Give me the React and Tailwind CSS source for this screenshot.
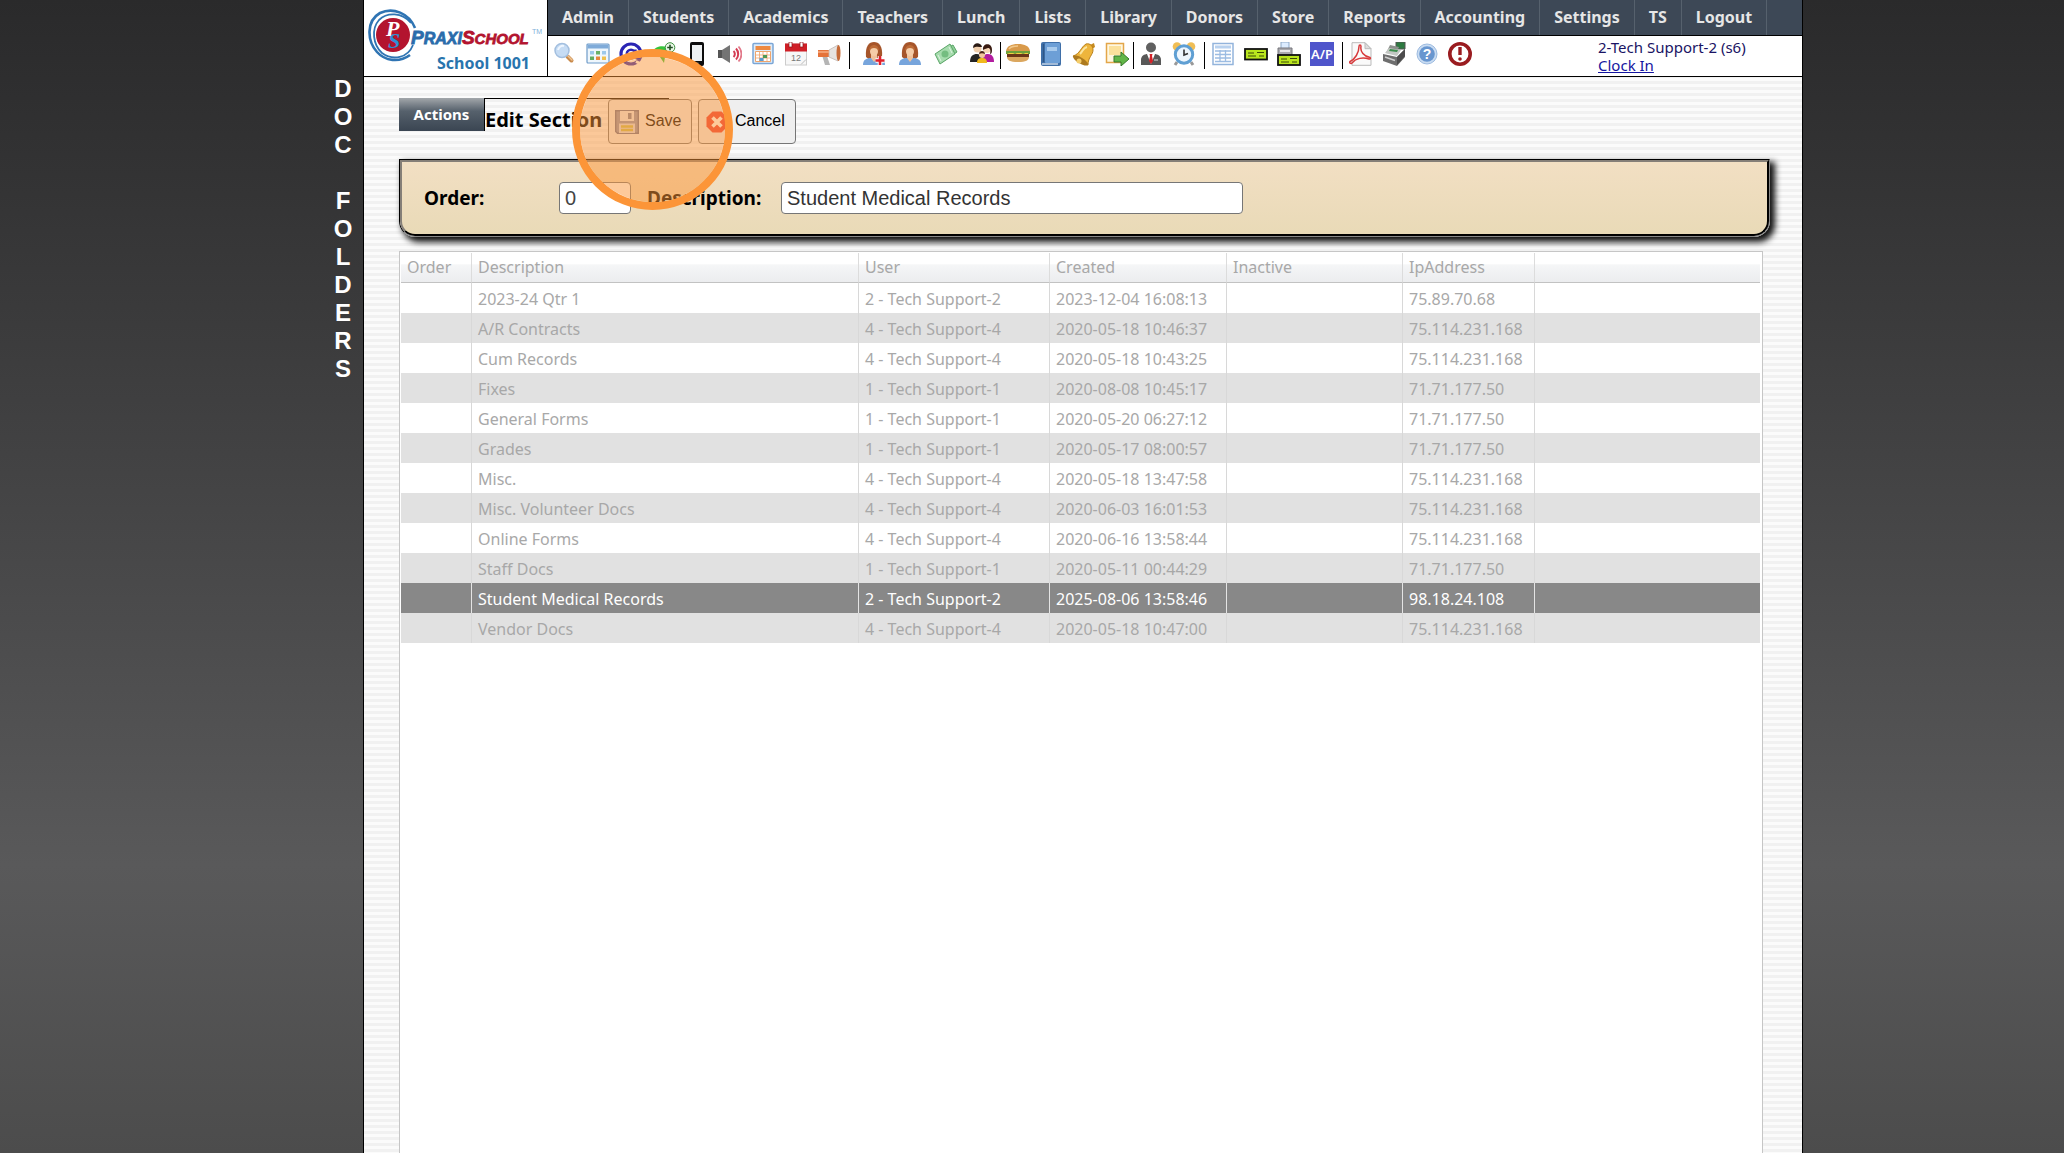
import React, { useState } from 'react';

const menuItems = [
  'Admin', 'Students', 'Academics', 'Teachers', 'Lunch', 'Lists', 'Library', 'Donors',
  'Store', 'Reports', 'Accounting', 'Settings', 'TS', 'Logout'
];

const sections = [
  { description: '2023-24 Qtr 1', user: '2 - Tech Support-2', created: '2023-12-04 16:08:13', ip: '75.89.70.68' },
  { description: 'A/R Contracts', user: '4 - Tech Support-4', created: '2020-05-18 10:46:37', ip: '75.114.231.168' },
  { description: 'Cum Records', user: '4 - Tech Support-4', created: '2020-05-18 10:43:25', ip: '75.114.231.168' },
  { description: 'Fixes', user: '1 - Tech Support-1', created: '2020-08-08 10:45:17', ip: '71.71.177.50' },
  { description: 'General Forms', user: '1 - Tech Support-1', created: '2020-05-20 06:27:12', ip: '71.71.177.50' },
  { description: 'Grades', user: '1 - Tech Support-1', created: '2020-05-17 08:00:57', ip: '71.71.177.50' },
  { description: 'Misc.', user: '4 - Tech Support-4', created: '2020-05-18 13:47:58', ip: '75.114.231.168' },
  { description: 'Misc. Volunteer Docs', user: '4 - Tech Support-4', created: '2020-06-03 16:01:53', ip: '75.114.231.168' },
  { description: 'Online Forms', user: '4 - Tech Support-4', created: '2020-06-16 13:58:44', ip: '75.114.231.168' },
  { description: 'Staff Docs', user: '1 - Tech Support-1', created: '2020-05-11 00:44:29', ip: '71.71.177.50' },
  { description: 'Student Medical Records', user: '2 - Tech Support-2', created: '2025-08-06 13:58:46', ip: '98.18.24.108', selected: true },
  { description: 'Vendor Docs', user: '4 - Tech Support-4', created: '2020-05-18 10:47:00', ip: '75.114.231.168' }
];

const Icon = ({ children }) => (
  <svg viewBox="0 0 24 24" className="block w-6 h-6" aria-hidden="true">{children}</svg>
);

const SearchIcon = () => (
  <Icon>
    <path d="M14.5 14.5L18.500 18.500" stroke="#c98a4b" strokeWidth="4" strokeLinecap="round" />
    <path d="M15 14L19 18" stroke="#efc493" strokeWidth="1.500" strokeLinecap="round" />
    <circle cx="9" cy="8.500" r="7" fill="#c6dcf4" stroke="#a3bfdf" strokeWidth="1.500" />
    <path d="M5 8a5 5 0 0 1 6-4" stroke="#eef6ff" strokeWidth="2" fill="none" />
  </Icon>
);

const WindowIcon = () => (
  <Icon>
    <rect x="1" y="2" width="22" height="19" rx="1" fill="#eef6fc" stroke="#6f9cc9" strokeWidth="1.200" />
    <rect x="1.500" y="2.500" width="21" height="4" fill="#7fabd9" />
    <rect x="4" y="9" width="4" height="3.500" fill="#9cc8ea" />
    <rect x="10" y="9" width="4" height="3.500" fill="#69b169" />
    <rect x="16" y="9" width="4" height="3.500" fill="#9cc8ea" />
    <rect x="4" y="14.500" width="4" height="3.500" fill="#62ab62" />
    <rect x="10" y="14.500" width="4" height="3.500" fill="#e8873c" />
    <rect x="16" y="14.500" width="4" height="3.500" fill="#efc04e" />
  </Icon>
);

const AtIcon = () => (
  <Icon>
    <circle cx="12" cy="12" r="10" fill="#fff" stroke="#2a25b4" strokeWidth="3.200" />
    <circle cx="12" cy="12" r="4.200" fill="none" stroke="#2a25b4" strokeWidth="2.600" />
    <path d="M16.500 7.500v7c0 3 4 2.500 5-.5" fill="none" stroke="#2a25b4" strokeWidth="2.400" />
    <path d="M17 19.500l5 2.500" stroke="#fff" strokeWidth="3" />
  </Icon>
);

const AddMessageIcon = () => (
  <Icon>
    <path d="M1 9c2-4 8-6 14-4l5 4c-1 5-4 6-7 6l-1 6-4-6C5 15 2 12 1 9z" fill="#35c53b" />
    <circle cx="18" cy="5.500" r="4.800" fill="#e9f8e7" stroke="#3c8f3e" />
    <path d="M18 2.700v5.600M15.200 5.500h5.600" stroke="#234f24" strokeWidth="1.600" />
  </Icon>
);

const PhoneIcon = () => (
  <Icon>
    <rect x="5" y="0" width="14" height="24" rx="2" fill="#0d0d0d" />
    <rect x="7" y="3" width="10" height="16" fill="#eef1f3" />
    <rect x="10.500" y="20.500" width="3" height="2" fill="#777" />
  </Icon>
);

const SpeakerIcon = () => (
  <Icon>
    <path d="M0 8h4v8H0z" fill="#555" />
    <path d="M4 8l8-5v18l-8-5z" fill="#747474" />
    <path d="M15.500 9a4 4 0 0 1 0 6" fill="none" stroke="#d43b52" strokeWidth="2" />
    <path d="M18 6.500a8 8 0 0 1 0 11" fill="none" stroke="#d43b52" strokeWidth="2" />
    <path d="M20.500 4.500a11 11 0 0 1 0 15" fill="none" stroke="#e2798a" strokeWidth="1.800" />
  </Icon>
);

const ScheduleIcon = () => (
  <Icon>
    <rect x="2" y="1.500" width="20" height="20" rx="1" fill="#deecf9" stroke="#7ba6d6" strokeWidth="1.500" />
    <rect x="4.500" y="4" width="15" height="4" fill="#ee8a41" />
    <path d="M4.500 9.500h15v10h-15z" fill="#fff" stroke="#efa56c" />
    <path d="M4.500 13h15M4.500 16h15M8.500 9.500v10M12 9.500v10M16 9.500v10" stroke="#efa56c" strokeWidth=".8" />
    <rect x="12" y="13" width="4" height="3" fill="#4f9955" />
    <rect x="8.500" y="16" width="4" height="3" fill="#5b9bd1" />
  </Icon>
);

const CalendarIcon = () => (
  <Icon>
    <rect x="1.500" y="2" width="21" height="21" fill="#f7f7f7" stroke="#ccc" />
    <rect x="1" y="1.500" width="22" height="8" fill="#cf1f27" />
    <rect x="5" y="0" width="3" height="5" fill="#fff" stroke="#8d1015" strokeWidth=".7" />
    <rect x="16" y="0" width="3" height="5" fill="#fff" stroke="#8d1015" strokeWidth=".7" />
    <text x="12" y="19" textAnchor="middle" fontSize="9" fill="#777" fontFamily="Liberation Sans, sans-serif">12</text>
    <path d="M17 22.500l5-5" stroke="#bbb" />
  </Icon>
);

const MegaphoneIcon = () => (
  <Icon>
    <path d="M5 13l3 10h5l-3-9z" fill="#b5b5b5" />
    <path d="M1 8h12v7H1z" fill="#e5733a" />
    <path d="M12 8l9-5v16l-9-4z" fill="#e7e3e0" stroke="#c0b8b2" strokeWidth=".8" />
    <ellipse cx="21.500" cy="11" rx="2" ry="8" fill="#c66a37" />
    <path d="M1 10h11" stroke="#f7ae85" strokeWidth="1.500" />
  </Icon>
);

const NurseIcon = ({ cross }) => (
  <Icon>
    <path d="M4 15C3 4 7 0 12 0s9 4 8 15l-4 3H8z" fill="#a6552a" />
    <path d="M1 23c0-5 3-7 8-7h6c5 0 8 2 8 7z" fill="#77a5dc" />
    <path d="M9 12h6v4l-3 4-3-4z" fill="#f0c29b" />
    <ellipse cx="12" cy="9.500" rx="4" ry="4.500" fill="#f5cda8" />
    <path d="M7 9c1-2 3-3 5-3 2 0 4 1 5 3 0-8-10-8-10 0z" fill="#bd6b37" />
    {cross && <path d="M18 14v9M13.500 18.500h9" stroke="#fff" strokeWidth="4.500" />}
    {cross && <path d="M18 14v9M13.500 18.500h9" stroke="#e0202b" strokeWidth="2.600" />}
  </Icon>
);

const MoneyIcon = () => (
  <Icon>
    <path d="M5 10L19 3l4 7-15 10z" fill="#8fcf98" stroke="#5aa567" />
    <path d="M1 12L16 2l5 10L6 22z" fill="#a7dcae" stroke="#5aa567" />
    <circle cx="11" cy="12" r="3.500" fill="#74bd80" />
    <path d="M4 13l3 6M15 5l3 6" stroke="#e0f4e3" />
  </Icon>
);

const FamilyIcon = () => (
  <Icon>
    <path d="M0 20c0-6 3-8 7-8s6 3 6 8z" fill="#242424" />
    <path d="M12 20c0-6 2-8 6-8s6 3 6 8z" fill="#b21c9f" />
    <circle cx="7.500" cy="6.500" r="4" fill="#f0cfae" />
    <path d="M3 6c0-6 8-6 9-1-3 0-6-1-9 1z" fill="#2a1a14" />
    <circle cx="17" cy="7" r="4" fill="#f5d5b5" />
    <path d="M13 8c-1-7 9-8 9 0 0 3-1 4-2 4 1-4 0-6-2-6-2 1-4 1-5 2z" fill="#3a1c12" />
    <path d="M7 21c0-4 2-5 5-5s5 1 5 5z" fill="#f0b91e" />
    <circle cx="12" cy="13" r="3" fill="#f2c79d" />
    <path d="M9 12c0-4 6-4 6 0-2-1-4-1-6 0z" fill="#4a2415" />
  </Icon>
);

const BurgerIcon = () => (
  <Icon>
    <path d="M0 9c1-5 5-7 12-7s11 2 12 7z" fill="#d99a4b" />
    <path d="M3 7c2-3 5-3 9-3" stroke="#f2c98b" strokeWidth="1.500" fill="none" />
    <path d="M0 9h24v3H0z" fill="#6da03a" />
    <path d="M1 11l4 2 4-2 4 2 4-2 5 2v-2z" fill="#f0cf3f" />
    <rect x="1" y="12" width="22" height="3" fill="#6b3518" />
    <path d="M1 15h22c0 3-3 5-11 5S1 18 1 15z" fill="#dba75f" />
  </Icon>
);

const BookIcon = () => (
  <Icon>
    <rect x="2" y="0" width="20" height="24" rx="2" fill="#3f6fa8" />
    <rect x="6" y="1" width="15" height="20" rx="1" fill="#6d9fd6" />
    <rect x="8" y="5" width="10" height="4" fill="#a8caec" />
    <path d="M3 22h16" stroke="#e7eef6" strokeWidth="1.200" />
    <path d="M4.500 2v18" stroke="#2f5787" strokeWidth="1.200" />
  </Icon>
);

const BellIcon = () => (
  <Icon>
    <path d="M18 3l4-2 1 4-3 2z" fill="#c58a1f" />
    <path d="M1 14C8 12 9 5 14 2c4-1 7 2 7 6 0 5-5 7-5 15C10 21 4 18 1 14z" fill="#eeb53c" stroke="#b87f1b" />
    <path d="M8 12c3-3 3-6 7-7" stroke="#fbe5a0" strokeWidth="2" fill="none" />
    <ellipse cx="8.500" cy="18.500" rx="8.500" ry="3" transform="rotate(31 8.500 18.500)" fill="#ad7a1e" />
    <circle cx="7" cy="19" r="2.500" fill="#f4cd6b" />
  </Icon>
);

const ExportIcon = () => (
  <Icon>
    <rect x="1.500" y="1.500" width="17" height="19" fill="#fff7e0" stroke="#e3a64a" strokeWidth="1.500" />
    <rect x="4" y="4" width="12" height="9" fill="#fbe19c" />
    <path d="M9 14h7v-4l8 7-8 7v-4H9z" fill="#62b648" stroke="#35792b" />
  </Icon>
);

const StaffIcon = () => (
  <Icon>
    <circle cx="12" cy="5.500" r="5" fill="#606060" />
    <path d="M2 23v-5c0-4 3-6 7-6h6c4 0 7 2 7 6v5z" fill="#585858" />
    <path d="M8 12l4 10 4-10z" fill="#fff" />
    <path d="M10.500 12h3l-.5 2 1 5-2 3-2-3 1-5z" fill="#d42228" />
    <path d="M15 18h4" stroke="#ddd" />
  </Icon>
);

const AlarmIcon = () => (
  <Icon>
    <circle cx="5" cy="4.500" r="4.300" fill="#f0be55" />
    <circle cx="19" cy="4.500" r="4.300" fill="#f0be55" />
    <path d="M5 20l-2 3M19 20l2 3" stroke="#999" strokeWidth="3" />
    <circle cx="12" cy="12.500" r="8.700" fill="#eef6fd" stroke="#5f9fd3" strokeWidth="3" />
    <path d="M12 7.500v5.500l4-1.500" stroke="#333" strokeWidth="1.600" fill="none" />
  </Icon>
);

const TableIcon = () => (
  <Icon>
    <rect x="2" y="1.500" width="20" height="21" fill="#fff" stroke="#93b4dc" strokeWidth="1.500" />
    <rect x="4" y="3.500" width="16" height="3" fill="#b9d2ef" />
    <path d="M4 9h16M4 12.500h16M4 16h16M4 19.500h16M9 8v12M14.500 8v12" stroke="#9cbce2" strokeWidth="1.300" />
  </Icon>
);

const CheckIcon = () => (
  <Icon>
    <rect x="1" y="7" width="22" height="10.500" fill="#b9e51e" stroke="#111" strokeWidth="1.800" />
    <path d="M4 11h6M13 10.500h7M4 14h8M15 14h5" stroke="#3c4a06" strokeWidth="1.200" />
  </Icon>
);

const PrintCheckIcon = () => (
  <Icon>
    <rect x="4" y="0" width="8" height="7" fill="#dcecff" stroke="#8fa9c8" />
    <path d="M1 6h14v9H1z" fill="#a9a9ae" stroke="#77777c" />
    <path d="M3 9h10" stroke="#e7e7ea" strokeWidth="2" />
    <rect x="1" y="13" width="22" height="10" fill="#b9e51e" stroke="#111" strokeWidth="1.800" />
    <path d="M4 17h6M13 16.500h7M4 20h8M15 20h5" stroke="#3c4a06" strokeWidth="1.200" />
  </Icon>
);

const PayableIcon = () => (
  <Icon>
    <rect width="24" height="24" fill="#4f55cb" />
    <text x="12" y="17" textAnchor="middle" fontSize="13" fontWeight="600" fill="#fff" fontFamily="Noto Sans, sans-serif">A/P</text>
  </Icon>
);

const PdfIcon = () => (
  <Icon>
    <path d="M3 .7h13l6 6v16.600H3z" fill="#fafafa" stroke="#bbb" />
    <path d="M16 .7v6h6z" fill="#ddd" stroke="#bbb" />
    <path d="M1 19.500c5-2 9-9 9-15 0-2 2-2 2 0-1 5 3 10 9 11 1 1 0 1.500-1 1.500-6-2-13-1-17 4-1 1-3 0-2-1.500z" fill="none" stroke="#d8393b" strokeWidth="1.500" />
  </Icon>
);

const RegisterIcon = () => (
  <Icon>
    <path d="M14 0h9v7h-9z" fill="#2d7a41" stroke="#555" />
    <path d="M8 3l9 2-3 7-10-1z" fill="#8d918d" />
    <path d="M1 12l14 3 8-8v8l-8 9-14-5z" fill="#6e6e6e" />
    <path d="M3 11l4-5 12 2-4 6z" fill="#c3c7c3" />
    <path d="M8 7l8 1-1 2-8-1z" fill="#3c8d4c" />
    <path d="M3 15l10 3.500" stroke="#d0d0d0" strokeWidth="1.500" />
    <path d="M15 15v8l8-9V7z" fill="#4c4c4c" />
  </Icon>
);

const HelpIcon = () => (
  <Icon>
    <circle cx="12" cy="12" r="10" fill="#c9dcf2" stroke="#9dbbe0" />
    <circle cx="12" cy="12" r="7.800" fill="#6896cf" />
    <text x="12" y="17" textAnchor="middle" fontSize="14" fontWeight="700" fill="#fff" fontFamily="Liberation Sans, sans-serif">?</text>
  </Icon>
);

const AlertIcon = () => (
  <Icon>
    <circle cx="12" cy="12" r="10.200" fill="#fff" stroke="#9a1c20" strokeWidth="3.600" />
    <path d="M12 5v8" stroke="#9a1c20" strokeWidth="3.400" />
    <circle cx="12" cy="17" r="1.800" fill="#9a1c20" />
  </Icon>
);

const SaveIcon = () => (
  <Icon>
    <path d="M.7.7h22.600v22.600H2.500L.7 21.500z" fill="#8f95b0" stroke="#6b7190" strokeWidth="1.400" />
    <rect x="5" y="1" width="14" height="10" fill="#e9ebf1" />
    <rect x="13" y="3" width="3.500" height="6" fill="#7a809b" />
    <rect x="4" y="13.500" width="16" height="9.500" fill="#dadde6" />
    <path d="M6 16.500h12M6 20h12" stroke="#c9bd52" strokeWidth="2.500" />
  </Icon>
);

const CancelIcon = () => (
  <Icon>
    <path d="M7.500 1.500h9l6 6v9l-6 6h-9l-6-6v-9z" fill="#ea3a36" />
    <path d="M7.500 7.500l9 9M16.500 7.500l-9 9" stroke="#fff" strokeWidth="3.600" />
  </Icon>
);

const Logo = () => (
  <svg viewBox="0 0 176 58" className="block w-[176px] h-[58px]" role="img" aria-label="PraxiSchool">
    <ellipse cx="25" cy="31" rx="17" ry="17" fill="#b3142f" />
    <path d="M47 24C41 9 25 3 12 9 -2 17 -1 37 9 48c8 9 22 11 33 3" fill="none" stroke="#2f74b3" strokeWidth="2.600" />
    <path d="M43 19C34 8 19 8 11 16 3 25 5 41 14 49c11 8 26 5 31-8" fill="none" stroke="#2f74b3" strokeWidth="1.800" />
    <text x="18" y="32" fontSize="22" fontStyle="italic" fontWeight="700" fill="#fff" fontFamily="Liberation Serif, serif">
      P<tspan x="20" y="44" fill="#2f8fd6">S</tspan>
    </text>
    <text x="43" y="40" fontFamily="Liberation Sans, sans-serif" fontStyle="italic" fontWeight="700" strokeWidth=".8" fill="#2a6cab" stroke="#2a6cab" fontSize="19">
      P<tspan fontSize="16">RAXI</tspan><tspan fill="#b3142f" stroke="#b3142f">S</tspan><tspan fontSize="15" fill="#b3142f" stroke="#b3142f">CHOOL</tspan>
    </text>
    <text x="164" y="30" fontSize="7" fill="#7fb0da" fontFamily="Liberation Sans, sans-serif">TM</text>
  </svg>
);

const ToolButton = ({ label, children }) => (
  <button type="button" aria-label={label} className="block w-6 h-6">{children}</button>
);

const Divider = () => <div className="w-px h-[27px] bg-black" />;

const Toolbar = () => (
  <div className="flex items-start pl-[5px] pt-[6px]">
    <div className="flex gap-[9px] mr-2">
      <ToolButton label="Search"><SearchIcon /></ToolButton>
      <ToolButton label="Dashboard"><WindowIcon /></ToolButton>
      <ToolButton label="Email"><AtIcon /></ToolButton>
      <ToolButton label="Message"><AddMessageIcon /></ToolButton>
      <ToolButton label="Text"><PhoneIcon /></ToolButton>
      <ToolButton label="Call"><SpeakerIcon /></ToolButton>
      <ToolButton label="Schedule"><ScheduleIcon /></ToolButton>
      <ToolButton label="Calendar"><CalendarIcon /></ToolButton>
      <ToolButton label="Announcements"><MegaphoneIcon /></ToolButton>
    </div>
    <Divider />
    <div className="flex gap-3 ml-3 mr-[6px]">
      <ToolButton label="Nurse"><NurseIcon cross /></ToolButton>
      <ToolButton label="Student"><NurseIcon /></ToolButton>
      <ToolButton label="Payments"><MoneyIcon /></ToolButton>
      <ToolButton label="Family"><FamilyIcon /></ToolButton>
    </div>
    <Divider />
    <div className="flex gap-[9px] ml-[5px] mr-1">
      <ToolButton label="Lunch"><BurgerIcon /></ToolButton>
      <ToolButton label="Grade book"><BookIcon /></ToolButton>
      <ToolButton label="Bell"><BellIcon /></ToolButton>
      <ToolButton label="Export"><ExportIcon /></ToolButton>
    </div>
    <Divider />
    <div className="flex gap-[9px] ml-[5px] mr-2">
      <ToolButton label="Staff"><StaffIcon /></ToolButton>
      <ToolButton label="Time clock"><AlarmIcon /></ToolButton>
    </div>
    <Divider />
    <div className="flex gap-[9px] ml-[6px] mr-2">
      <ToolButton label="Ledger"><TableIcon /></ToolButton>
      <ToolButton label="Check"><CheckIcon /></ToolButton>
      <ToolButton label="Print check"><PrintCheckIcon /></ToolButton>
      <ToolButton label="Accounts payable"><PayableIcon /></ToolButton>
    </div>
    <Divider />
    <div className="flex gap-[9px] ml-[6px]">
      <ToolButton label="PDF"><PdfIcon /></ToolButton>
      <ToolButton label="Register"><RegisterIcon /></ToolButton>
      <ToolButton label="Help"><HelpIcon /></ToolButton>
      <ToolButton label="Alert"><AlertIcon /></ToolButton>
    </div>
  </div>
);

const Header = () => (
  <header className="flex h-[77px] bg-white border-b border-black">
    <div className="w-[184px] shrink-0 border-r border-black pl-1 pt-1">
      <Logo />
      <div className="-mt-2 pr-[17px] text-right text-[16px] leading-[18px] font-bold text-[#2874ad]">School 1001</div>
    </div>
    <div className="flex-1">
      <nav className="flex h-9 bg-[#3d4856] border-b border-black">
        {menuItems.map((item) => (
          <a
            key={item}
            href="#"
            className="h-full px-[14px] border-r border-[#56616d] text-[16px] leading-[34px] font-bold text-[#e6e6e6]"
          >
            {item}
          </a>
        ))}
      </nav>
      <div className="flex justify-between">
        <Toolbar />
        <div className="w-[204px] pt-[2px] text-[15px] leading-[18px] text-[#1a1464]">
          <div>2-Tech Support-2 (s6)</div>
          <a href="#" className="underline text-[#1414a0]">Clock In</a>
        </div>
      </div>
    </div>
  </header>
);

const SectionForm = () => {
  const [order, setOrder] = useState('0');
  const [description, setDescription] = useState('Student Medical Records');

  return (
    <div className="mr-8 rounded-b-[16px] border border-t-black border-l-black border-r-[#888] border-b-[#888] shadow-[4px_4px_6px_1px_#111]">
      <div className="flex items-center h-[76px] pl-[22px] rounded-b-[15px] border-2 border-t-[#857f78] border-l-[#857f78] border-r-black border-b-black bg-gradient-to-b from-[#f2dfc3] to-[#e9dab7]">
        <label htmlFor="order" className="w-[135px] text-[19px] font-bold">Order:</label>
        <input
          id="order"
          value={order}
          onChange={(e) => setOrder(e.target.value)}
          className="w-[72px] h-8 px-[5px] mr-4 rounded-[4px] border border-[#767676] bg-white font-['Liberation_Sans',sans-serif] text-[20px] text-[#444]"
        />
        <label htmlFor="description" className="w-[134px] text-[19px] font-bold">Description:</label>
        <input
          id="description"
          value={description}
          onChange={(e) => setDescription(e.target.value)}
          className="w-[462px] h-8 px-[5px] rounded-[4px] border border-[#767676] bg-white font-['Liberation_Sans',sans-serif] text-[20px] text-[#333]"
        />
      </div>
    </div>
  );
};

const SectionGrid = () => (
  <div className="flex-1 mt-[14px] mr-[39px] pl-px pr-[2px] pt-px border border-b-0 border-[#c6c6c6] bg-white">
    <table className="w-full table-fixed border-separate border-spacing-0 text-[16px] leading-[20px] text-left text-[#a8a8a8]">
      <colgroup>
        <col className="w-[71px]" />
        <col className="w-[387px]" />
        <col className="w-[191px]" />
        <col className="w-[177px]" />
        <col className="w-[176px]" />
        <col className="w-[132px]" />
        <col />
      </colgroup>
      <thead>
        <tr className="h-[30px] bg-linear-to-b from-white from-35% via-[#f5f6f7] via-40% to-[#ebecee]">
          {['Order', 'Description', 'User', 'Created', 'Inactive', 'IpAddress'].map((name) => (
            <th key={name} className="px-[6px] pb-[2px] border-b border-b-[#c2c2c2] border-r border-r-[#dcdcdc] font-normal">{name}</th>
          ))}
          <th className="border-b border-[#c2c2c2]" />
        </tr>
      </thead>
      <tbody>
        {sections.map((row) => (
          <tr
            key={row.description}
            className={row.selected
              ? 'h-[30px] bg-[#888] text-white *:border-[#e4e4e4]'
              : 'h-[30px] even:bg-[#e1e1e1] *:border-[#d8d8d8]'}
          >
            <td className="border-r" />
            <td className="px-[6px] pt-[2px] border-r">{row.description}</td>
            <td className="px-[6px] pt-[2px] border-r">{row.user}</td>
            <td className="px-[6px] pt-[2px] border-r">{row.created}</td>
            <td className="border-r" />
            <td className="px-[6px] pt-[2px] border-r">{row.ip}</td>
            <td />
          </tr>
        ))}
      </tbody>
    </table>
  </div>
);

const App = () => {
  return (
    <div className="flex justify-center min-h-screen bg-linear-to-b from-[#2a2a2b] via-[#59595a] via-75% to-[#4c4c4c] font-['Noto_Sans',sans-serif] text-black">
      <div className="flex flex-col items-center w-[102px] pl-[62px] pt-[75px] font-['Liberation_Sans',sans-serif] text-[24px] leading-[28px] font-bold text-white">
        {'DOC FOLDERS'.split('').map((letter, i) => (
          <span key={i} className="h-7">{letter}</span>
        ))}
      </div>
      <main className="relative flex flex-col w-full max-w-[1440px] border-x border-black bg-[repeating-linear-gradient(#fbfbfb_0px,#fbfbfb_3px,#f1f1f1_3px,#f1f1f1_6px)]">
        <Header />
        <div className="flex flex-col flex-1 pl-[35px] pt-[21px]">
          <div className="flex items-start h-[61px]">
            <button type="button" className="w-[85px] h-[33px] bg-linear-to-b from-[#a3a7ab] via-[#56616c] via-40% to-[#3a4552] text-[15px] font-bold text-white">
              Actions
            </button>
            <div className="w-[185px] h-[33px] border-t border-l border-black">
              <h1 className="pt-[7px] text-[20px] leading-7 font-bold whitespace-nowrap">Edit Section</h1>
            </div>
            {/* the buttons sit on the end of the title's rule */}
            <div className="flex gap-[6px] -ml-[61px] pt-px font-['Liberation_Sans',sans-serif] text-[16px]">
              <button type="button" className="flex items-center gap-[6px] w-[84px] h-[45px] pl-[6px] rounded-[4px] border border-[#767676] bg-[#efefef]">
                <SaveIcon />
                <span className="pb-[2px]">Save</span>
              </button>
              <button type="button" className="flex items-center gap-[6px] w-[98px] h-[45px] pl-[6px] rounded-[4px] border border-[#767676] bg-[#efefef]">
                <CancelIcon />
                <span className="pb-[2px]">Cancel</span>
              </button>
            </div>
          </div>
          <SectionForm />
          <SectionGrid />
        </div>
        {/* click marker over the Save button */}
        <div className="absolute left-[208px] top-[49px] w-[161px] h-[161px] rounded-full border-8 border-[#fc9538] bg-[#fc9538]/50 bg-clip-padding pointer-events-none" />
      </main>
    </div>
  );
};

export default App;
